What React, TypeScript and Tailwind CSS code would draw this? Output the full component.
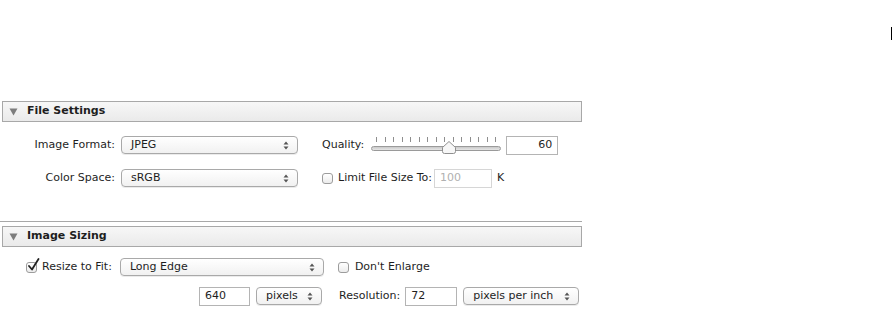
import React from 'react';

const font = { fontFamily: '"DejaVu Sans", "Liberation Sans", sans-serif' };

const Arrows = () => (
  <svg width="6" height="9" viewBox="0 0 6 9" className="shrink-0">
    <path d="M3 0.5 L5.5 3.5 L0.5 3.5 Z" fill="#555" />
    <path d="M3 8.5 L5.5 5.5 L0.5 5.5 Z" fill="#555" />
  </svg>
);

const Select = ({ value, width }: { value: string; width: string }) => (
  <div
    className={`flex h-[18px] ${width} items-center justify-between rounded-[4px] border border-[#a9a9a9] bg-gradient-to-b from-white to-[#f1f1f1] pl-[9px] pr-[8px] text-[11px] text-[#1e1e1e] shadow-[0_1px_0_rgba(0,0,0,0.08)]`}
  >
    <span>{value}</span>
    <Arrows />
  </div>
);

const Checkbox = ({ checked }: { checked?: boolean }) => (
  <div className="relative h-[11px] w-[11px] shrink-0 rounded-[3px] border border-[#9c9c9c] bg-gradient-to-b from-white to-[#ececec]">
    {checked && (
      <svg width="13" height="14" viewBox="0 0 13 14" className="absolute -top-[5px] left-[0px]">
        <path d="M2 8 L5 11.5 L11.5 1" stroke="#222" strokeWidth="1.8" fill="none" strokeLinecap="round" strokeLinejoin="round" />
      </svg>
    )}
  </div>
);

const Field = ({ value, width, align = 'left', muted }: { value: string; width: string; align?: 'left' | 'right'; muted?: boolean }) => (
  <div
    className={`flex h-[19px] ${width} items-center border bg-white px-[5px] text-[11px] ${align === 'right' ? 'justify-end' : 'justify-start'} ${muted ? 'border-[#d6d6d6] text-[#b0b0b0]' : 'border-[#b4b4b4] text-[#1e1e1e]'}`}
  >
    {value}
  </div>
);

const Header = ({ title }: { title: string }) => (
  <div className="ml-[2px] flex h-[21px] w-[580px] items-center border border-[#a8a8a8] bg-gradient-to-b from-[#f7f7f7] to-[#eaeaea] pl-[6px]">
    <svg width="9" height="8" viewBox="0 0 9 8" className="mr-[9px]">
      <path d="M0.5 0.5 L8.5 0.5 L4.5 7.5 Z" fill="#7d7d7d" />
    </svg>
    <span className="text-[11px] font-bold text-[#1e1e1e]">{title}</span>
  </div>
);

const Slider = () => {
  const ticks = Array.from({ length: 15 });
  return (
    <div className="relative h-[22px] w-[130px]">
      <div className="flex justify-between px-[5px] pt-[2px]">
        {ticks.map((_, i) => (
          <div key={i} className="h-[5px] w-px bg-[#8e8e8e]" />
        ))}
      </div>
      <div className="absolute left-0 top-[11px] h-[5px] w-[130px] rounded-full border border-[#9a9a9a] bg-gradient-to-b from-[#c9c9c9] to-[#e6e6e6]" />
      <svg width="14" height="13" viewBox="0 0 14 13" className="absolute left-[71px] top-[6px]">
        <path d="M7 0.5 L13.5 6.5 L13.5 10.5 Q13.5 12.5 11.5 12.5 L2.5 12.5 Q0.5 12.5 0.5 10.5 L0.5 6.5 Z" fill="#f7f7f7" stroke="#8f8f8f" />
      </svg>
    </div>
  );
};

export default function App() {
  return (
    <div className="relative h-[314px] w-[893px] bg-white text-[11px] text-[#1e1e1e]" style={font}>
      <div className="absolute left-[891px] top-[27px] h-[13px] w-px bg-black" />
      <div className="pt-[101px]">
        <Header title="File Settings" />

        <div className="mt-[13px] flex h-[20px] items-center">
          <div className="w-[115px] text-right">Image Format:</div>
          <div className="ml-[6px]">
            <Select value="JPEG" width="w-[177px]" />
          </div>
          <div className="ml-[24px]">Quality:</div>
          <div className="ml-[7px] mt-[2px]">
            <Slider />
          </div>
          <div className="ml-[5px]">
            <Field value="60" width="w-[52px]" align="right" />
          </div>
        </div>

        <div className="mt-[13px] flex h-[20px] items-center">
          <div className="w-[115px] text-right">Color Space:</div>
          <div className="ml-[6px]">
            <Select value="sRGB" width="w-[177px]" />
          </div>
          <div className="ml-[24px]">
            <Checkbox />
          </div>
          <div className="ml-[5px]">Limit File Size To:</div>
          <div className="ml-[2px]">
            <Field value="100" width="w-[58px]" muted />
          </div>
          <div className="ml-[5px]">K</div>
        </div>

        <div className="mt-[33px] h-px w-[582px] bg-[#a8a8a8]" />
        <div className="mt-[4px]">
          <Header title="Image Sizing" />
        </div>

        <div className="mt-[10px] flex h-[20px] items-center">
          <div className="ml-[26px]">
            <Checkbox checked />
          </div>
          <div className="ml-[5px]">Resize to Fit:</div>
          <div className="ml-[8px]">
            <Select value="Long Edge" width="w-[204px]" />
          </div>
          <div className="ml-[14px]">
            <Checkbox />
          </div>
          <div className="ml-[6px]">Don't Enlarge</div>
        </div>

        <div className="mt-[9px] flex h-[20px] items-center">
          <div className="ml-[199px]">
            <Field value="640" width="w-[51px]" />
          </div>
          <div className="ml-[6px]">
            <Select value="pixels" width="w-[66px]" />
          </div>
          <div className="ml-[17px]">Resolution:</div>
          <div className="ml-[5px]">
            <Field value="72" width="w-[52px]" />
          </div>
          <div className="ml-[6px]">
            <Select value="pixels per inch" width="w-[116px]" />
          </div>
        </div>
      </div>
    </div>
  );
}
